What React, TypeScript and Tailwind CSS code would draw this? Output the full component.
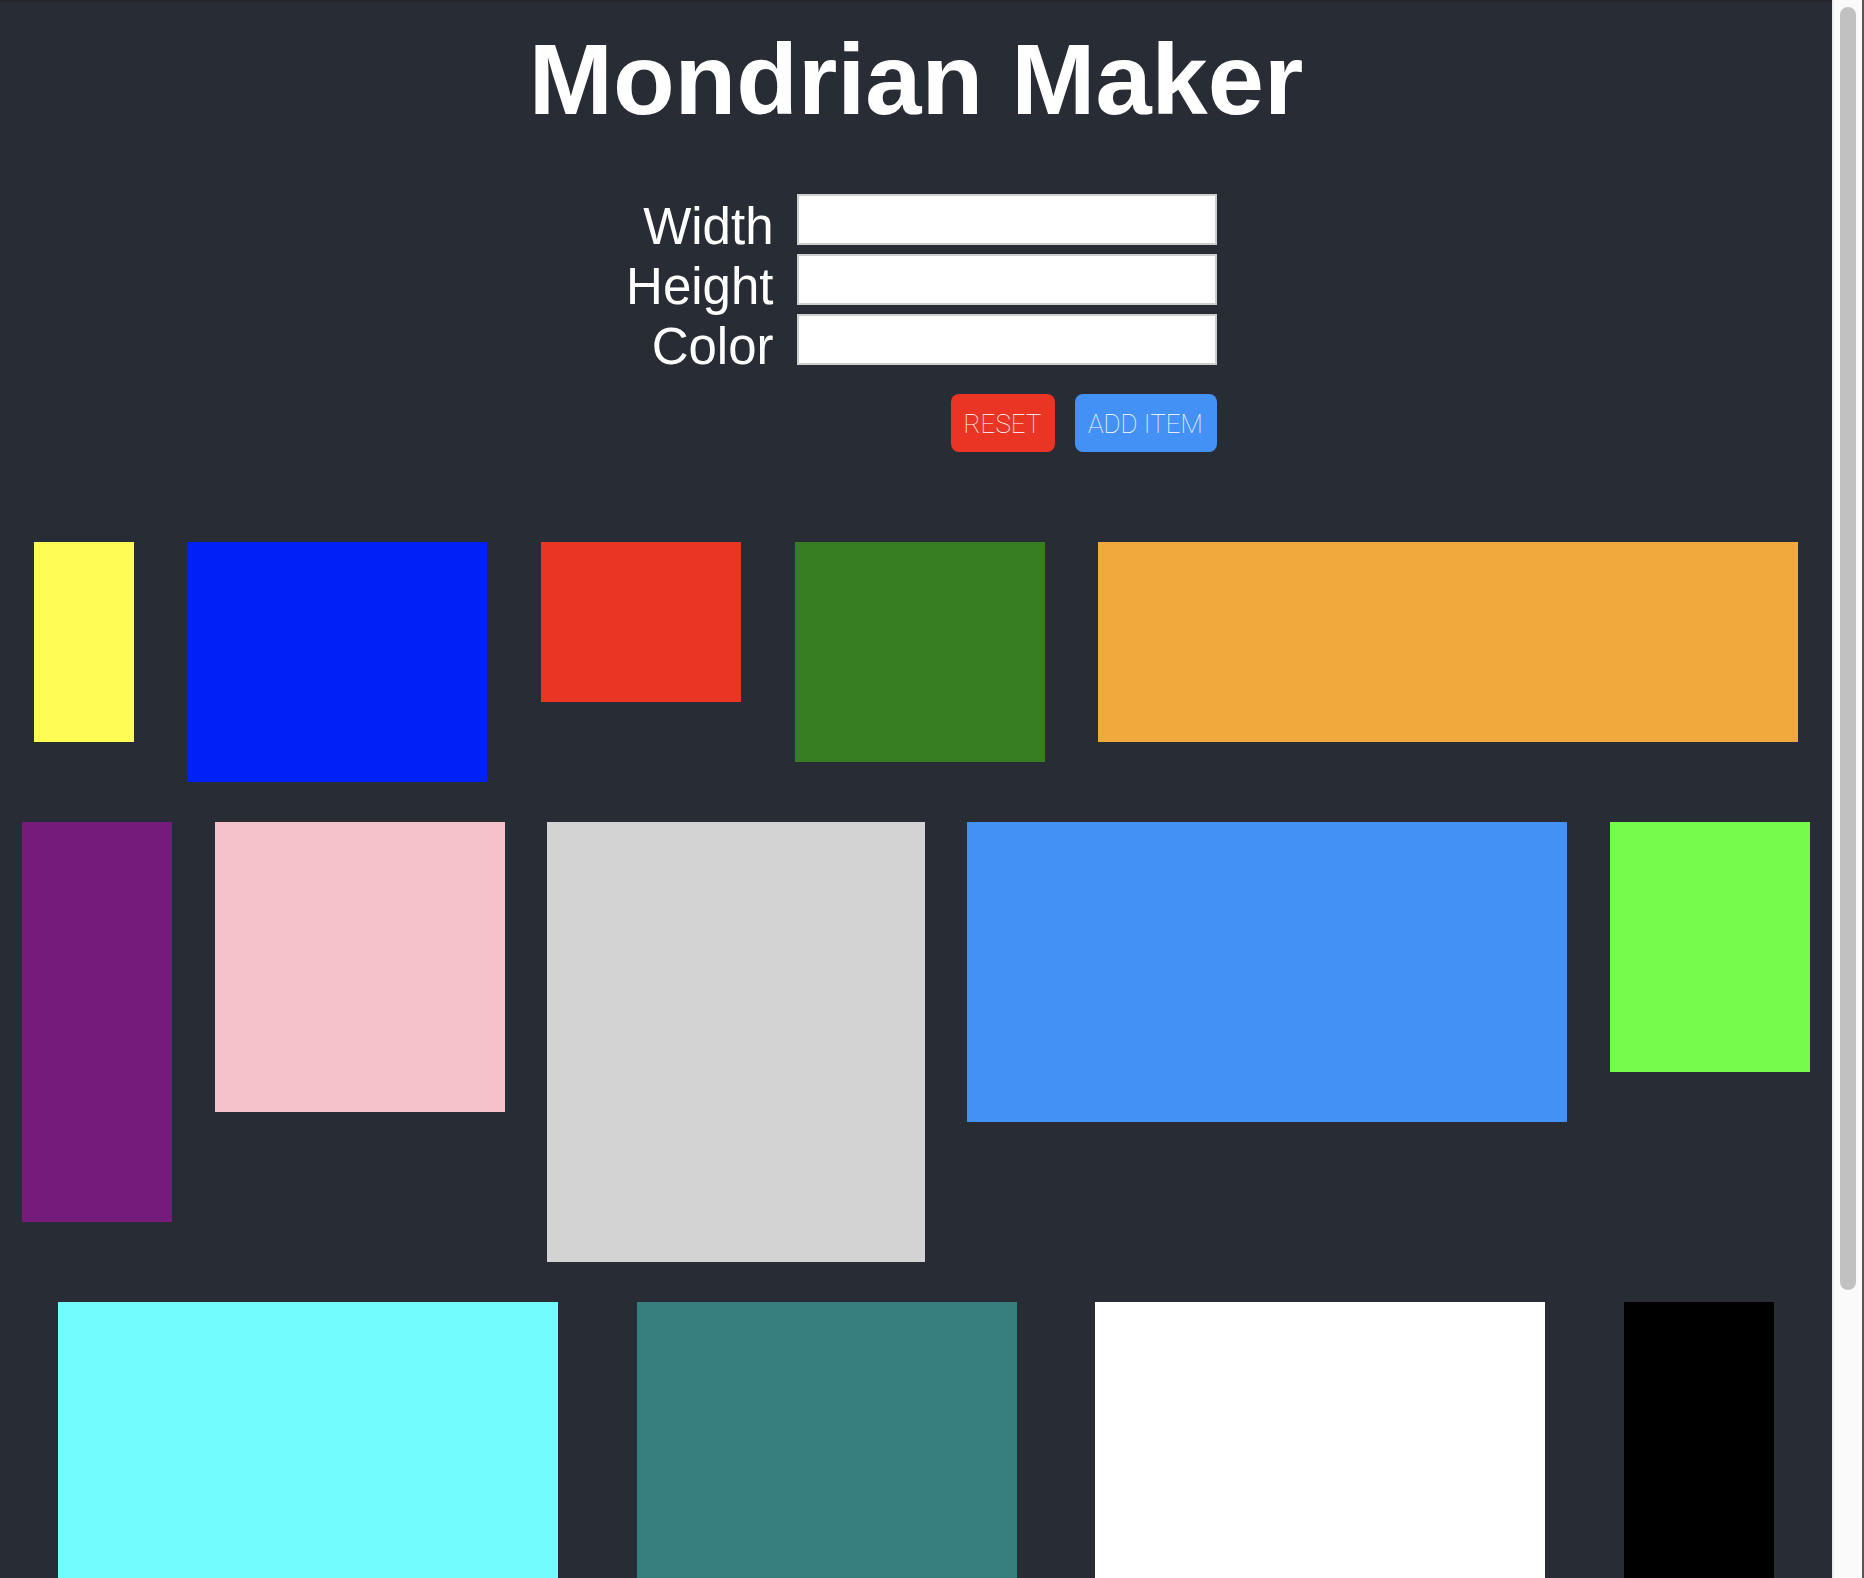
import React from 'react';

interface Block {
    width: number;
    height: number;
    color: string;
}

const blocks: Block[] = [
    { width: 100, height: 200, color: '#fffd55' },
    { width: 300, height: 240, color: '#0021f5' },
    { width: 200, height: 160, color: '#ea3424' },
    { width: 250, height: 220, color: '#377e22' },
    { width: 700, height: 200, color: '#f1a83c' },
    { width: 150, height: 400, color: '#741b7c' },
    { width: 290, height: 290, color: '#f5c2cb' },
    { width: 378, height: 440, color: '#d3d3d3' },
    { width: 600, height: 300, color: '#4391f5' },
    { width: 200, height: 250, color: '#76fa4c' },
    { width: 500, height: 420, color: '#73fcfd' },
    { width: 380, height: 360, color: '#377e7f' },
    { width: 450, height: 400, color: '#ffffff' },
    { width: 150, height: 380, color: '#000000' },
];

const fields = ['Width', 'Height', 'Color'];

function FormRow({ label }: { label: string }) {
    return (
        <div className="flex gap-[23px]">
            <label className="w-[158px] self-end text-right text-[51px] leading-[36px] text-white font-['Liberation_Sans',Arial,sans-serif]">
                {label}
            </label>
            <input
                type="text"
                className="h-[51px] w-[420px] border-2 border-[#cdcdcd] bg-white outline-none"
            />
        </div>
    );
}

export default function App() {
    return (
        <div className="flex h-[1578px] w-full overflow-hidden bg-[#282c34]">
            <main className="flex min-w-0 flex-1 flex-col border-t-2 border-[#232428]">
                <h1 className="pt-[20px] text-center text-[101px] leading-[115px] font-bold text-white font-['Liberation_Sans',Arial,sans-serif]">
                    Mondrian Maker
                </h1>

                <div className="mx-auto mt-[57px] flex w-[601px] flex-col gap-[9px]">
                    {fields.map((f) => (
                        <FormRow key={f} label={f} />
                    ))}
                </div>

                <div className="mx-auto mt-[29px] flex w-[601px] justify-end gap-5 font-['Roboto',Arial,sans-serif]">
                    <button className="h-[58px] w-[104px] rounded-lg bg-[#ea3424] pt-[3px] text-[26px] font-thin text-white">
                        RESET
                    </button>
                    <button className="h-[58px] w-[142px] rounded-lg bg-[#4391f5] pt-[3px] text-[26px] font-thin text-white">
                        ADD ITEM
                    </button>
                </div>

                <div className="mt-[70px] flex flex-wrap items-start justify-evenly">
                    {blocks.map((b, i) => (
                        <div
                            key={i}
                            className="m-5 shrink-0"
                            style={{ width: b.width, height: b.height, backgroundColor: b.color }}
                        />
                    ))}
                </div>
            </main>

            {/* fake scrollbar */}
            <div className="flex w-[32px] shrink-0 border-l-2 border-r-2 border-l-[#ececec] border-r-[#565656] bg-[#fafafa] px-[6px] pt-[7px]">
                <div className="h-[1283px] w-full rounded-full bg-[#c1c1c1]" />
            </div>
        </div>
    );
}
